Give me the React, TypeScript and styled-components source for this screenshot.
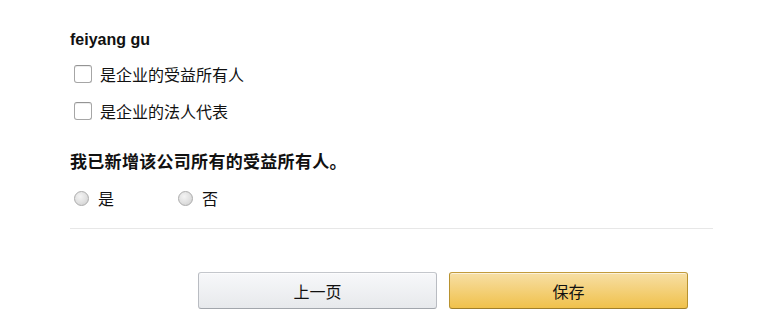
import React from "react";
import styled, { createGlobalStyle } from "styled-components";

const Global = createGlobalStyle`
  html, body { margin: 0; padding: 0; background: #fff; }
  body { font-family: "Liberation Sans", Arial, "Noto Sans CJK SC", sans-serif; color: #111; }
`;

const Page = styled.div`
  padding: 30px 0 0 70px;
  width: 643px;
  display: flex;
  flex-direction: column;
`;

const Name = styled.div`
  font-family: "Liberation Sans", Arial, sans-serif;
  font-weight: 700;
  font-size: 16px;
  line-height: 20px;
  height: 20px;
  color: #111;
`;

const CheckList = styled.div`
  display: flex;
  flex-direction: column;
  gap: 17px;
  margin-top: 14px;
  padding-left: 4px;
`;

const Row = styled.label`
  display: flex;
  align-items: center;
  height: 20px;
  gap: 8px;
  font-family: "Noto Sans CJK SC", "Liberation Sans", sans-serif;
  font-size: 16px;
  color: #111;
`;

const Box = styled.input.attrs({ type: "checkbox" })`
  appearance: none;
  margin: 0;
  width: 18px;
  height: 18px;
  box-sizing: border-box;
  border: 1px solid #a6a6a6;
  border-top-color: #949494;
  border-radius: 3px;
  background: #fff;
  box-shadow: 0 1px 0 rgba(255,255,255,.5), inset 0 1px 0 rgba(0,0,0,.07);
`;

const Question = styled.div`
  margin-top: 29px;
  height: 22px;
  line-height: 22px;
  font-family: "Noto Sans CJK SC", sans-serif;
  font-weight: 700;
  font-size: 17px;
  letter-spacing: 0.3px;
  color: #111;
`;

const RadioRow = styled.div`
  margin-top: 16px;
  display: flex;
  align-items: center;
  height: 20px;
  padding-left: 4px;
`;

const RadioLabel = styled.label<{ $w: number }>`
  display: flex;
  align-items: center;
  gap: 9px;
  width: ${(p) => p.$w}px;
  font-family: "Noto Sans CJK SC", sans-serif;
  font-size: 16px;
  color: #111;
`;

const Radio = styled.input.attrs({ type: "radio" })`
  appearance: none;
  margin: 0;
  width: 15px;
  height: 15px;
  box-sizing: border-box;
  border-radius: 50%;
  border: 1px solid #acacac;
  background: radial-gradient(circle at 40% 35%, #f4f4f4 0%, #e0e0e0 55%, #cbcbcb 100%);
`;

const Divider = styled.hr`
  margin: 20px 0 0;
  border: 0;
  height: 1px;
  background: #e7e7e7;
`;

const Buttons = styled.div`
  margin-top: 43px;
  display: flex;
  gap: 12px;
  padding-left: 128px;
`;

const Button = styled.button<{ $primary?: boolean }>`
  width: 239px;
  height: 37px;
  box-sizing: border-box;
  border-radius: 3px;
  border: 1px solid;
  font-family: "Noto Sans CJK SC", sans-serif;
  font-size: 16px;
  color: #111;
  padding: 0;
  border-color: ${(p) => (p.$primary ? "#c29b3c #b8922f #9f7e2a" : "#c4c7cc #b9bcc2 #a2a6ac")};
  background: ${(p) =>
    p.$primary
      ? "linear-gradient(to bottom, #f7dfa5, #f0c14b)"
      : "linear-gradient(to bottom, #f7f8fa, #e7e9ec)"};
  box-shadow: inset 0 1px 0 rgba(255, 255, 255, 0.6);
`;

export default function App() {
  return (
    <>
      <Global />
      <Page>
        <Name>feiyang gu</Name>
        <CheckList>
          <Row>
            <Box />
            是企业的受益所有人
          </Row>
          <Row>
            <Box />
            是企业的法人代表
          </Row>
        </CheckList>
        <Question>我已新增该公司所有的受益所有人。</Question>
        <RadioRow>
          <RadioLabel $w={104}>
            <Radio name="all" />是
          </RadioLabel>
          <RadioLabel $w={60}>
            <Radio name="all" />否
          </RadioLabel>
        </RadioRow>
        <Divider />
        <Buttons>
          <Button>上一页</Button>
          <Button $primary>保存</Button>
        </Buttons>
      </Page>
    </>
  );
}
